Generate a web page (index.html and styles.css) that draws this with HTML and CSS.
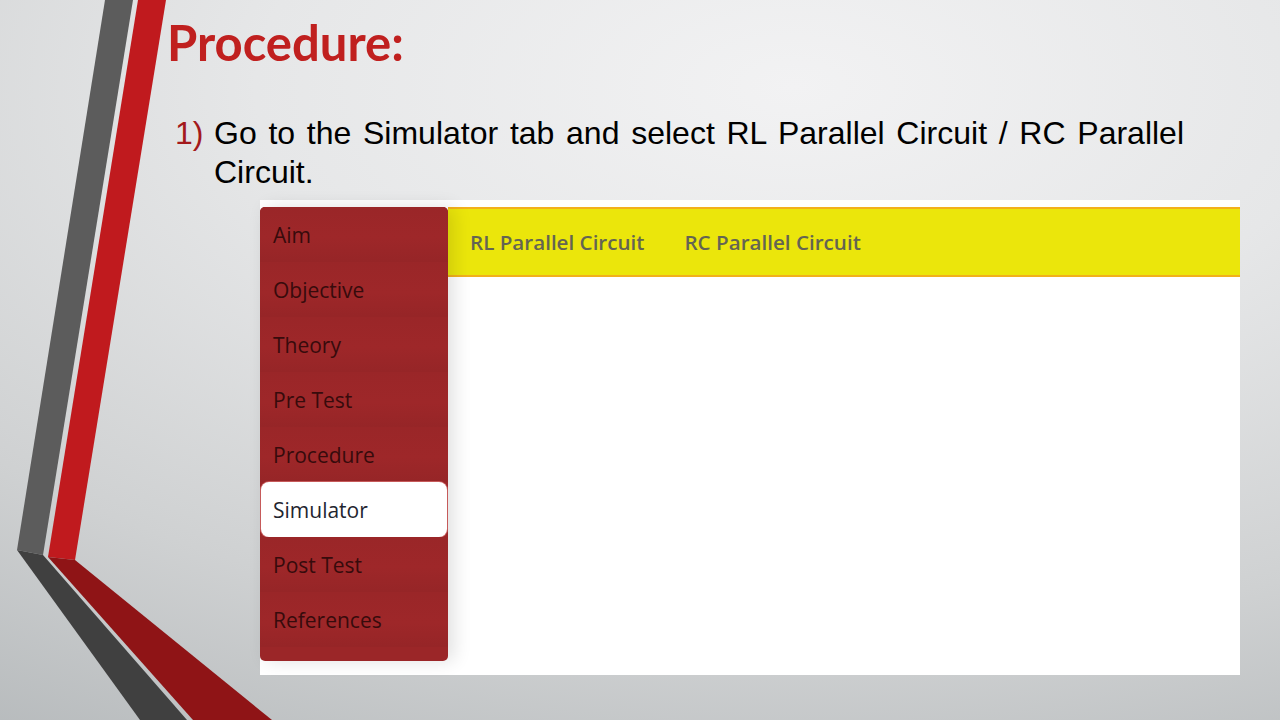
FILE: index.html
```html
<!DOCTYPE html>
<html lang="en">
<head>
<meta charset="utf-8">
<title>Procedure</title>
<link rel="stylesheet" href="styles.css">
</head>
<body>
<div class="slide">
  <svg class="deco" width="1280" height="720" viewBox="0 0 1280 720" aria-hidden="true">
    <polygon points="105,0 133,0 43,555 17,550" fill="#5c5c5c"/>
    <polygon points="17,550 43,555 187,720 140,720" fill="#404040"/>
    <polygon points="138,0 166,0 75,560 48,557" fill="#c01a1e"/>
    <polygon points="48,557 75,560 272,720 193,720" fill="#8f1416"/>
  </svg>
  <div class="content">
    <h1 class="title">Procedure:</h1>
    <div class="step">
      <span class="step-num">1)</span>
      <p class="step-text">Go to the Simulator tab and select RL Parallel Circuit / RC Parallel Circuit.</p>
    </div>
    <div class="shot">
      <div class="shot-inner">
        <nav class="side">
          <div class="side-item">Aim</div>
          <div class="side-item">Objective</div>
          <div class="side-item">Theory</div>
          <div class="side-item">Pre Test</div>
          <div class="side-item">Procedure</div>
          <div class="side-item active">Simulator</div>
          <div class="side-item">Post Test</div>
          <div class="side-item">References</div>
        </nav>
        <div class="main">
          <div class="tabs">
            <span class="tab">RL Parallel Circuit</span>
            <span class="tab">RC Parallel Circuit</span>
          </div>
          <div class="pane"></div>
        </div>
      </div>
    </div>
  </div>
</div>
</body>
</html>
```

FILE: styles.css
```css
html, body {
  margin: 0;
  padding: 0;
}

body {
  width: 1280px;
  height: 720px;
  overflow: hidden;
}

.slide {
  position: relative;
  width: 1280px;
  height: 720px;
  overflow: hidden;
  background: radial-gradient(ellipse 120% 110% at 62% 12%, #f2f2f3 0%, #e6e7e8 35%, #cfd1d2 70%, #b4b8ba 100%);
}

.deco {
  position: absolute;
  left: 0;
  top: 0;
}

.content {
  position: relative;
  padding: 13px 0 0 167px;
  display: flex;
  flex-direction: column;
}

.title {
  margin: 0;
  font-family: "Lato", "Liberation Sans", sans-serif;
  font-weight: 700;
  font-size: 49px;
  line-height: 58px;
  color: #c0201f;
}

.step {
  margin-top: 43px;
  display: flex;
  font-family: "Liberation Sans", Arial, sans-serif;
  font-size: 32px;
  line-height: 39px;
  color: #000;
}

.step-num {
  width: 47px;
  padding-left: 8px;
  box-sizing: border-box;
  color: #a3191c;
  flex: none;
}

.step-text {
  margin: 0;
  width: 970px;
  text-align: justify;
}

.shot {
  margin: 8px 0 0 93px;
  width: 980px;
  height: 475px;
  background: #fff;
  padding: 7px 0 14px 0;
  box-sizing: border-box;
}

.shot-inner {
  display: flex;
  height: 100%;
}

.side {
  position: relative;
  z-index: 1;
  width: 188px;
  flex: none;
  background: #9b2628;
  border-radius: 5px;
  padding-bottom: 14px;
  box-shadow: 6px 0 18px rgba(0, 0, 0, 0.12);
  display: flex;
  flex-direction: column;
}

.side-item {
  height: 55px;
  display: flex;
  align-items: center;
  padding-left: 13px;
  box-sizing: border-box;
  font-family: "Open Sans", "DejaVu Sans", sans-serif;
  font-size: 21px;
  color: #370b0c;
  background: linear-gradient(to bottom, #9a2628 0%, #9e2729 55%, #962527 100%);
}

.side-item:first-child {
  border-radius: 5px 5px 0 0;
}

.side-item.active {
  background: #fff;
  color: #1f2530;
  border-radius: 8px;
  margin: 0 1px;
  padding-left: 12px;
  box-shadow: 0 0 0 1px #c65a5a;
}

.main {
  flex: 1;
  display: flex;
  flex-direction: column;
}

.tabs {
  height: 70px;
  box-sizing: border-box;
  background: #ebe60b;
  border-top: 2px solid #f2b01c;
  border-bottom: 2px solid #f2b01c;
  display: flex;
  align-items: center;
  gap: 40px;
  padding-left: 22px;
}

.tab {
  font-family: "Open Sans", "Liberation Sans", sans-serif;
  font-weight: 600;
  font-size: 20.6px;
  color: #646453;
}

.pane {
  flex: 1;
  background: #fff;
}
```
